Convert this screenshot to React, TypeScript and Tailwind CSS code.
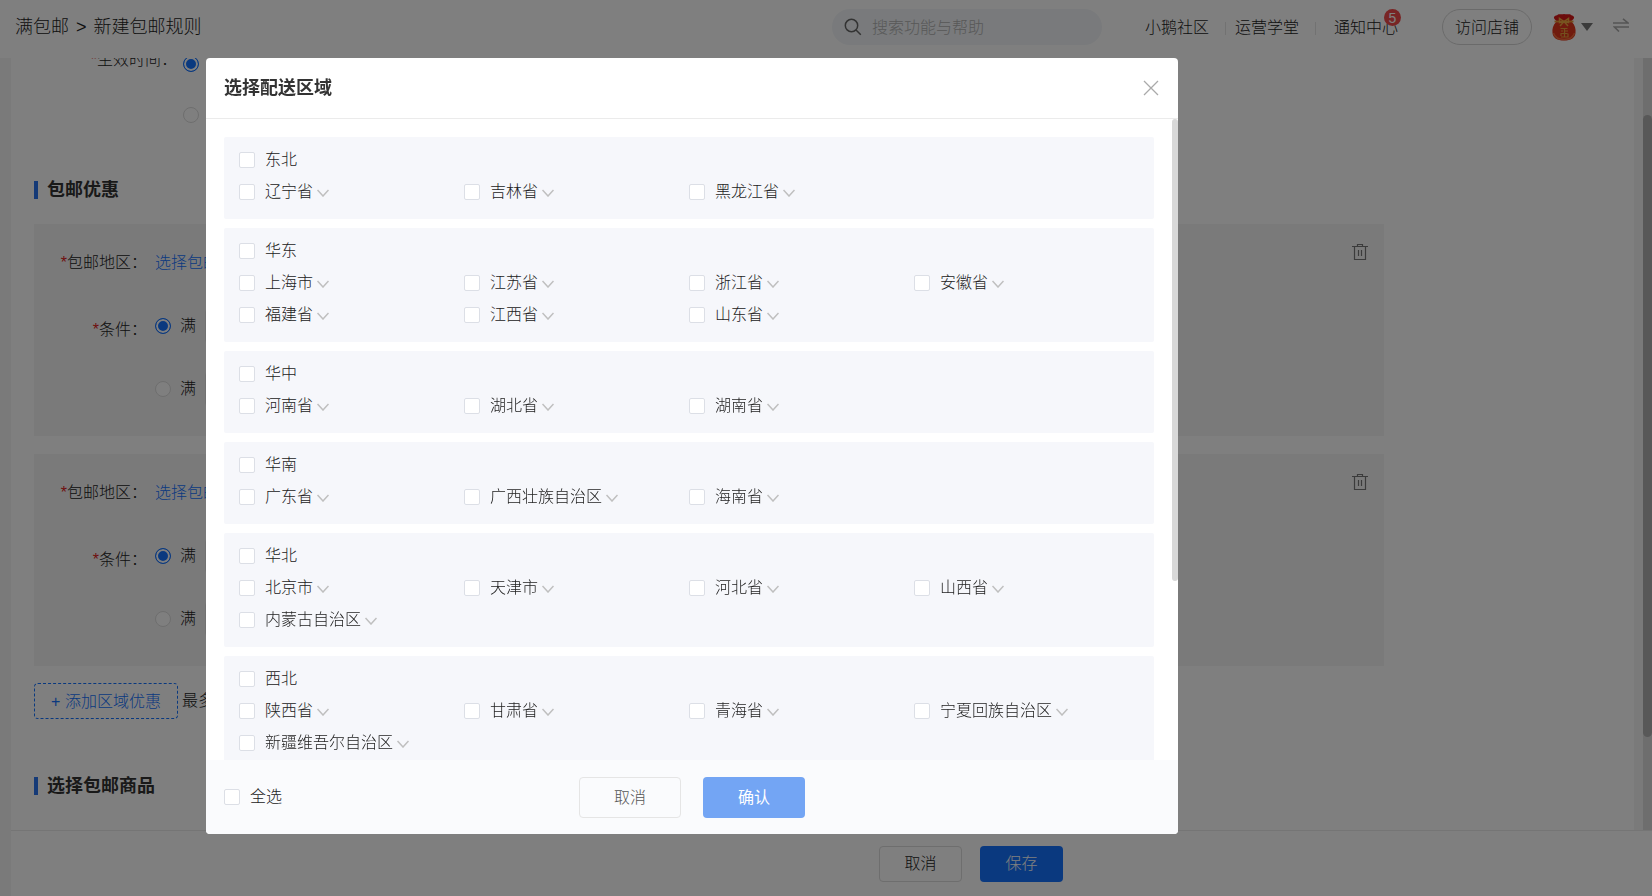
import { useState } from "react"

interface Region {
  name: string
  provinces: string[]
}

const regions: Region[] = [
  { name: "东北", provinces: ["辽宁省", "吉林省", "黑龙江省"] },
  { name: "华东", provinces: ["上海市", "江苏省", "浙江省", "安徽省", "福建省", "江西省", "山东省"] },
  { name: "华中", provinces: ["河南省", "湖北省", "湖南省"] },
  { name: "华南", provinces: ["广东省", "广西壮族自治区", "海南省"] },
  { name: "华北", provinces: ["北京市", "天津市", "河北省", "山西省", "内蒙古自治区"] },
  { name: "西北", provinces: ["陕西省", "甘肃省", "青海省", "宁夏回族自治区", "新疆维吾尔自治区"] },
]

const allProvinces = regions.flatMap((r) => r.provinces)

const radioClass =
  "size-4 shrink-0 appearance-none rounded-full border border-[#dcdcdc] bg-white checked:border-[#1472ff] checked:bg-[#1472ff] checked:shadow-[inset_0_0_0_2px_white]"

function TrashIcon() {
  return (
    <svg width="18" height="18" viewBox="0 0 18 18" fill="none" stroke="#777" strokeWidth="1.200">
      <path d="M1 3.500h16M6.500 3V1.500h5V3M3.500 3.500v13h11v-13M7.500 7v6M10.500 7v6" />
    </svg>
  )
}

function LuckyBag() {
  return (
    <svg width="26" height="28" viewBox="0 0 26 28">
      <path d="M3 4C4 2 6 3 7 1.500C9 .5 10 2 13 1C16 2 18 .5 19.500 1.500C20.500 3 22 2 23 4C23.500 6 21 7 20 8.500H6C5 7 2.500 6 3 4Z" fill="#d81818" />
      <path d="M5 9C2 12 1 16 1.500 20C2 25 6 27.500 13 27.500C20 27.500 24 25 24.500 20C25 16 24 12 21 9Z" fill="#e0361c" />
      <path d="M2.500 20C4 25 8 26.500 13 26.500C18 26.500 22 25 23.500 20" fill="none" stroke="#f26a3a" strokeWidth="1.500" />
      <path d="M3.500 8.500H22.500" stroke="#eb9a3a" strokeWidth="1.800" />
      <path d="M13 8.500L8.500 5.500V9.500L13 8.500L17.500 5.500V9.500ZM13 8.500L9 13M13 8.500L17 13" fill="none" stroke="#f0a840" strokeWidth="1.500" />
      <path d="M9.500 15.500H16.500M10 18H12M14 18H17M9.500 20.500H16.500M10 23V20.500M10 24H17V20.500M13.500 15V24" fill="none" stroke="#e8a03a" strokeWidth="1.200" />
    </svg>
  )
}

function Header() {
  return (
    <header className="flex h-[58px] shrink-0 items-start bg-white pt-[9px] pr-[23px] pl-[15px] text-[#222]">
      <nav className="flex h-9 items-center gap-[7px] text-lg">
        <a href="#list">满包邮</a>
        <span>&gt;</span>
        <span>新建包邮规则</span>
      </nav>
      <label className="ml-auto flex h-9 w-[270px] items-center gap-[10px] rounded-full bg-[#f2f5f8] pl-3">
        <svg width="18" height="18" viewBox="0 0 18 18" fill="none" stroke="#666" strokeWidth="1.500">
          <circle cx="7.500" cy="7.500" r="6.200" />
          <path d="M12 12l4.800 4.800" />
        </svg>
        <input
          type="text"
          aria-label="搜索"
          placeholder="搜索功能与帮助"
          className="min-w-0 flex-1 bg-transparent pt-[2px] outline-none placeholder:text-[#b0b0b0]"
        />
      </label>
      <div className="ml-[43px] flex h-9 items-center pt-[2px]">
        <a href="#community">小鹅社区</a>
        <span className="mr-[9px] ml-4 h-[13px] w-px bg-[#e5e5e5]" />
        <a href="#school">运营学堂</a>
        <span className="mr-[18px] ml-4 h-[13px] w-px bg-[#e5e5e5]" />
        <a href="#notice" className="relative">
          通知中心
          <span className="absolute -top-[7px] -right-[3px] flex size-[17px] items-center justify-center rounded-full bg-[#f04a4a] text-sm text-white">
            5
          </span>
        </a>
      </div>
      <button className="ml-11 h-9 w-[90px] rounded-full border border-[#d5d5d5] pt-[2px]">访问店铺</button>
      <button className="ml-[19px] flex h-9 items-center gap-1" aria-label="账号">
        <LuckyBag />
        <svg width="12" height="8" viewBox="0 0 12 8" fill="#777">
          <path d="M0 0h12L6 8z" />
        </svg>
      </button>
      <button className="ml-5 flex h-8 items-center" aria-label="切换">
        <svg width="16" height="14" viewBox="0 0 16 14" fill="none" stroke="#aaa" strokeWidth="1.600">
          <path d="M0 5h15L10 .8M16 9H1.500L6 13.500" />
        </svg>
      </button>
    </header>
  )
}

function SectionTitle({ children }: { children: string }) {
  return (
    <h2 className="flex h-[26px] items-center gap-[9px] text-lg font-bold text-[#333]">
      <span className="h-[18px] w-1 bg-[#2a75ee]" />
      {children}
    </h2>
  )
}

function Required() {
  return <span className="text-[#e02020]">*</span>
}

function DiscountCard({ id }: { id: string }) {
  return (
    <section className="flex h-[212px] max-w-[1350px] items-start bg-[#f5f5f5] text-[#222]">
      <div className="grid flex-1 grid-cols-[113px_1fr] gap-x-2 pt-[26px]">
        <span className="text-right leading-[26px]"><Required />包邮地区：</span>
        <a href="#region" className="leading-[26px] text-[#1472ff]">选择包邮地区</a>
        <span className="mt-8 text-right leading-[44px]"><Required />条件：</span>
        <div className="mt-8 flex flex-col gap-[27px]">
          {["amount", "count"].map((kind, i) => (
            <div key={kind} className="flex h-9 items-center">
              <label className="flex items-center gap-[9px]">
                <input type="radio" name={id} defaultChecked={i === 0} className={radioClass} />
                满
              </label>
              <input type="text" aria-label="满" className="ml-[9px] h-9 w-24 rounded border border-[#e5e5e5] bg-white" />
            </div>
          ))}
        </div>
      </div>
      <button className="mt-[19px] mr-[15px]" aria-label="删除">
        <TrashIcon />
      </button>
    </section>
  )
}

function RulePage() {
  return (
    <div className="flex h-full flex-col">
      <Header />
      <div className="flex min-h-0 flex-1 bg-[#f4f4f4] pl-[11px]">
        <div className="flex min-w-0 flex-1 flex-col">
          <div className="flex min-h-0 flex-1">
            <main className="min-w-0 flex-1 overflow-hidden bg-white px-[23px]">
              <div className="-mt-3 grid grid-cols-[143px_1fr] gap-x-[6px] text-[#222]">
                <span className="text-right leading-7"><Required />生效时间：</span>
                <div className="flex flex-col gap-[15px]">
                  <label className="flex h-9 items-center">
                    <input type="radio" name="time" defaultChecked className={radioClass} aria-label="生效时间一" />
                  </label>
                  <label className="flex h-9 items-center">
                    <input type="radio" name="time" className={radioClass} aria-label="生效时间二" />
                  </label>
                </div>
              </div>
              <div className="mt-[44px]">
                <SectionTitle>包邮优惠</SectionTitle>
              </div>
              <div className="mt-[21px] flex flex-col gap-[18px]">
                <DiscountCard id="rule-1" />
                <DiscountCard id="rule-2" />
              </div>
              <div className="mt-[17px] flex items-center gap-1 text-[#222]">
                <button className="h-9 w-36 rounded border border-dashed border-[#1472ff] pt-px text-[#1472ff]">
                  + 添加区域优惠
                </button>
                <span>最多</span>
              </div>
              <div className="mt-[54px]">
                <SectionTitle>选择包邮商品</SectionTitle>
              </div>
            </main>
            {/* page scrollbar */}
            <div className="ml-[9px] w-[9px] bg-[#dcdcdc] pt-[57px]">
              <div className="h-[87%] rounded-full bg-[#b0b0b0]" />
            </div>
          </div>
          <footer className="flex h-[66px] shrink-0 justify-center gap-[18px] border-t border-[#ebebeb] bg-white pt-[15px] pl-[279px]">
            <button className="h-9 w-[83px] rounded border border-[#dcdcdc] text-[#222]">取消</button>
            <button className="h-9 w-[83px] rounded bg-[#1472ff] text-white">保存</button>
          </footer>
        </div>
      </div>
    </div>
  )
}

interface CheckProps {
  label: string
  checked: boolean
  onChange: () => void
}

function Check({ label, checked, onChange }: CheckProps) {
  return (
    <label className="flex items-center gap-[10px] whitespace-nowrap">
      <input
        type="checkbox"
        checked={checked}
        onChange={onChange}
        className="size-4 shrink-0 appearance-none rounded-xs border border-[#dcdfe6] bg-white checked:border-[#1472ff] checked:bg-[#1472ff]"
      />
      {label}
    </label>
  )
}

function RegionDialog() {
  const [selected, setSelected] = useState<string[]>([])

  const hasAll = (names: string[]) => names.every((n) => selected.includes(n))

  const toggle = (names: string[]) => {
    if (hasAll(names)) {
      setSelected(selected.filter((n) => !names.includes(n)))
    } else {
      setSelected([...new Set([...selected, ...names])])
    }
  }

  return (
    <div className="fixed inset-0 bg-black/50 pt-[58px] pb-[62px] pl-[206px]">
      <div role="dialog" aria-labelledby="dialog-title" className="flex h-full w-[972px] max-w-full flex-col overflow-hidden rounded bg-white text-[#222]">
        <div className="flex h-[61px] shrink-0 items-center justify-between border-b border-[#ebebeb] pr-[19px] pl-[18px]">
          <h1 id="dialog-title" className="text-lg font-bold text-[#333]">选择配送区域</h1>
          <button aria-label="关闭">
            <svg width="16" height="16" viewBox="0 0 16 16" stroke="#aaa" strokeWidth="1.300">
              <path d="M1 1l14 14M15 1L1 15" />
            </svg>
          </button>
        </div>

        <div className="flex min-h-0 flex-1">
          <div className="flex flex-1 flex-col gap-[9px] overflow-hidden px-[18px] pt-[18px]">
            {regions.map((region) => (
              <section key={region.name} className="shrink-0 rounded-xs bg-[#f6f7fb] pt-[7px] pb-[11px] pl-[15px]">
                <div className="flex h-8 items-center">
                  <Check label={region.name} checked={hasAll(region.provinces)} onChange={() => toggle(region.provinces)} />
                </div>
                <div className="grid grid-cols-[repeat(4,225px)]">
                  {region.provinces.map((name) => (
                    <div key={name} className="flex h-8 items-center gap-1">
                      <Check label={name} checked={hasAll([name])} onChange={() => toggle([name])} />
                      <button aria-label={`展开${name}`} className="pt-[2px]">
                        <svg width="12" height="8" viewBox="0 0 12 8" fill="none" stroke="#bfbfbf" strokeWidth="1.500">
                          <path d="M.5 1L6 7l5.500-6" />
                        </svg>
                      </button>
                    </div>
                  ))}
                </div>
              </section>
            ))}
          </div>
          <div className="w-[6px]">
            <div className="h-[72%] rounded-full bg-[#d8d8d8]" />
          </div>
        </div>

        <div className="grid h-[74px] shrink-0 grid-cols-[1fr_auto_1fr] items-center bg-[#fafbfd] px-[18px]">
          <Check label="全选" checked={hasAll(allProvinces)} onChange={() => toggle(allProvinces)} />
          <div className="flex gap-[22px]">
            <button className="h-[41px] w-[102px] rounded border border-[#e5e5e5] pt-[2px] text-[#555]">取消</button>
            <button className="h-[41px] w-[102px] rounded bg-[#73a5f4] pt-[2px] font-normal text-white">确认</button>
          </div>
        </div>
      </div>
    </div>
  )
}

export default function App() {
  return (
    <div className="h-screen overflow-hidden font-['Liberation_Sans','Noto_Sans_CJK_SC',sans-serif] text-base font-light">
      <RulePage />
      <RegionDialog />
    </div>
  )
}
